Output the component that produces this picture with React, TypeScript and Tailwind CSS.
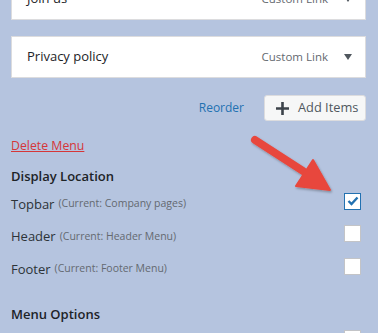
import React from 'react';

const font = { fontFamily: '"Open Sans", "Noto Sans", sans-serif' };

const MenuItemCard: React.FC<{ title: string; className?: string }> = ({ title, className }) => (
  <div
    className={`h-[42px] flex items-center bg-white border border-[#dcdcde] pl-[15px] pr-[13px] ${className ?? ''}`}
  >
    <span className="text-[13px] text-[#1d2327]">{title}</span>
    <span className="ml-auto text-[11.5px] text-[#646970]">Custom Link</span>
    <svg width="8" height="6" viewBox="0 0 8 6" className="ml-[16px]">
      <path d="M0 0 L8 0 L4 6 Z" fill="#50575e" />
    </svg>
  </div>
);

const Checkbox: React.FC<{ checked?: boolean }> = ({ checked }) => (
  <div
    className={`w-[17px] h-[17px] bg-white flex items-center justify-center border ${
      checked ? 'border-[#2271b1]' : 'border-[#c3c4c7]'
    }`}
  >
    {checked && (
      <svg width="12" height="10" viewBox="0 0 12 10">
        <path d="M1.5 5 L4.5 8 L10.5 1.5" stroke="#2271b1" strokeWidth="2.4" fill="none" />
      </svg>
    )}
  </div>
);

const LocationRow: React.FC<{ name: string; current: string; checked?: boolean }> = ({ name, current, checked }) => (
  <div className="h-[32.5px] flex items-center">
    <span className="text-[13px] text-[#2c3338]">{name}</span>
    <span className="ml-[4px] text-[10.5px] text-[#646970]">(Current: {current})</span>
    <div className="ml-auto mr-[5px] mb-[6px]">
      <Checkbox checked={checked} />
    </div>
  </div>
);

export default function App() {
  return (
    <div className="relative w-[378px] h-[333px] overflow-hidden bg-[#b5c4df]" style={font}>
      <div className="px-[11px] pr-[12px]">
        {/* menu items */}
        <MenuItemCard title="Join us" className="-mt-[22px]" />
        <MenuItemCard title="Privacy policy" className="mt-[16px]" />

        <div className="mt-[17px] flex items-center justify-end gap-[20px]">
          <a className="text-[12px] text-[#2271b1]">Reorder</a>
          <button className="h-[26px] w-[102px] flex items-center gap-[9px] pl-[11px] bg-[#f6f7f7] border border-[#dcdcde] rounded-[3px]">
            <svg width="13" height="13" viewBox="0 0 13 13">
              <path d="M6.5 0 V13 M0 6.5 H13" stroke="#3c434a" strokeWidth="2.6" />
            </svg>
            <span className="text-[12.8px] text-[#50575e]">Add Items</span>
          </button>
        </div>

        <div className="mt-[13px] leading-[20px]">
          <a className="text-[12.3px] text-[#d63638] underline">Delete Menu</a>
        </div>

        <h3 className="mt-[10px] leading-[20px] text-[13px] font-semibold text-[#1d2327]">Display Location</h3>

        <div className="mt-[2px]">
          <LocationRow name="Topbar" current="Company pages" checked />
          <LocationRow name="Header" current="Header Menu" />
          <LocationRow name="Footer" current="Footer Menu" />
        </div>

        <h3 className="mt-[18px] leading-[20px] text-[13px] font-semibold text-[#1d2327]">Menu Options</h3>
        <div className="mt-[6px] flex justify-end mr-[5px]">
          <Checkbox />
        </div>
      </div>

      {/* annotation arrow */}
      <svg className="absolute left-0 top-0 pointer-events-none" width="378" height="333">
        <defs>
          <filter id="sh" x="-20%" y="-20%" width="140%" height="140%">
            <feDropShadow dx="1" dy="1.5" stdDeviation="1.2" floodColor="#000" floodOpacity="0.3" />
          </filter>
        </defs>
        <g filter="url(#sh)">
          <line x1="255" y1="140" x2="303" y2="171" stroke="#e8473c" strokeWidth="8" strokeLinecap="round" />
          <path d="M296 186 L313 160 L330 190 Z" fill="#e8473c" strokeLinejoin="round" stroke="#e8473c" strokeWidth="2" />
        </g>
      </svg>
    </div>
  );
}
